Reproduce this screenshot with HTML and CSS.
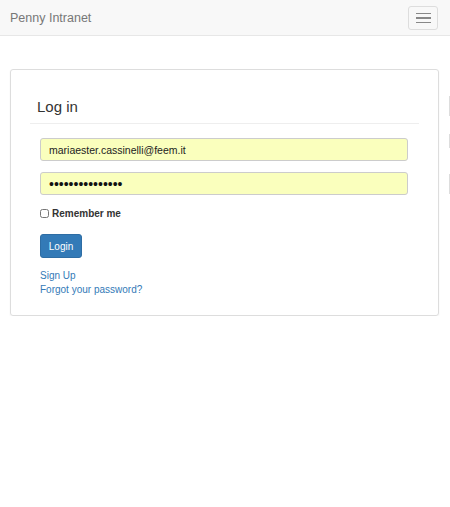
FILE: index.html
```html
<!DOCTYPE html>
<html lang="en">
<head>
    <meta charset="UTF-8">
    <meta name="viewport" content="width=device-width, initial-scale=1.0">
    <title>Penny Intranet - Log in</title>
    <link rel="stylesheet" href="styles.css">
</head>
<body>
    <nav class="navbar">
        <a class="brand" href="#">Penny Intranet</a>
        <button class="toggle" type="button">
            <span class="bar"></span>
            <span class="bar"></span>
            <span class="bar"></span>
        </button>
    </nav>
    <div class="container">
        <div class="panel">
            <h2>Log in</h2>
            <hr>
            <form class="login-form">
                <input class="field" type="email" value="mariaester.cassinelli@feem.it">
                <input class="field pass" type="password" value="passwordpasswor">
                <label class="remember"><input type="checkbox"> Remember me</label>
                <button class="btn" type="button">Login</button>
                <div class="links">
                    <a href="#">Sign Up</a>
                    <a href="#">Forgot your password?</a>
                </div>
            </form>
        </div>
        <!-- colonna laterale tagliata fuori dallo schermo -->
        <div class="side">
            <div class="ghost g1"></div>
            <div class="ghost g2"></div>
            <div class="ghost g3"></div>
        </div>
    </div>
</body>
</html>
```

FILE: styles.css
```css
body {
    font-family: "Liberation Sans", Arial, sans-serif;
    margin: 0;
    background-color: #fff;
    color: #333;
    overflow: hidden;
    height: 507px;
}

.navbar {
    height: 35px;
    background-color: #f8f8f8;
    border-bottom: 1px solid #e7e7e7;
    display: flex;
    align-items: center;
    justify-content: space-between;
    padding: 0 12px 0 10px;
}

.brand {
    color: #777;
    font-size: 12.5px;
    text-decoration: none;
}

.toggle {
    width: 30px;
    height: 24px;
    border: 1px solid #ddd;
    border-radius: 3px;
    background: transparent;
    display: flex;
    flex-direction: column;
    align-items: center;
    justify-content: center;
    gap: 3px;
    padding: 0;
    margin-top: 1px;
}

.bar {
    display: block;
    width: 15px;
    height: 1.5px;
    background-color: #888;
}

.container {
    display: flex;
    gap: 10px;
    padding: 33px 0 0 10px;
    overflow: hidden;
}

.panel {
    width: 429px;
    flex-shrink: 0;
    box-sizing: border-box;
    border: 1px solid #ddd;
    border-radius: 3px;
    box-shadow: 0 1px 2px rgba(0, 0, 0, 0.06);
    padding: 27px 19px 18px 19px;
}

h2 {
    font-size: 15px;
    font-weight: normal;
    margin: 0 0 0 7px;
    line-height: 20px;
}

hr {
    border: 0;
    border-top: 1px solid #eee;
    margin: 6px 0 14px 0;
}

.login-form {
    display: flex;
    flex-direction: column;
    align-items: flex-start;
    padding: 0 11px 0 10px;
}

.field {
    width: 100%;
    height: 23px;
    box-sizing: border-box;
    border: 1px solid #ccc;
    border-radius: 3px;
    background-color: #faffbd;
    font-family: "Liberation Sans", Arial, sans-serif;
    font-size: 10.5px;
    color: #222;
    padding: 0 8px;
    margin-bottom: 11px;
}

.pass {
    font-size: 14px;
    color: #111;
}

.remember {
    display: flex;
    align-items: center;
    font-size: 10px;
    font-weight: bold;
    margin: 2px 0 15px 0;
}

.remember input {
    width: 9px;
    height: 9px;
    margin: 0 3px 0 0;
}

.btn {
    background-color: #337ab7;
    border: 1px solid #2e6da4;
    border-radius: 3px;
    color: #fff;
    font-family: "Liberation Sans", Arial, sans-serif;
    font-size: 10px;
    width: 42px;
    height: 24px;
    padding: 0;
    margin-bottom: 11px;
}

.links {
    display: flex;
    flex-direction: column;
    font-size: 10px;
    line-height: 14px;
}

.links a {
    color: #337ab7;
    text-decoration: none;
}

.side {
    width: 100px;
    flex-shrink: 0;
    padding-top: 27px;
}

.ghost {
    border-left: 1px solid #ddd;
    height: 20px;
    margin-bottom: 18px;
}

.g2 {
    height: 14px;
    margin-bottom: 26px;
}
```
